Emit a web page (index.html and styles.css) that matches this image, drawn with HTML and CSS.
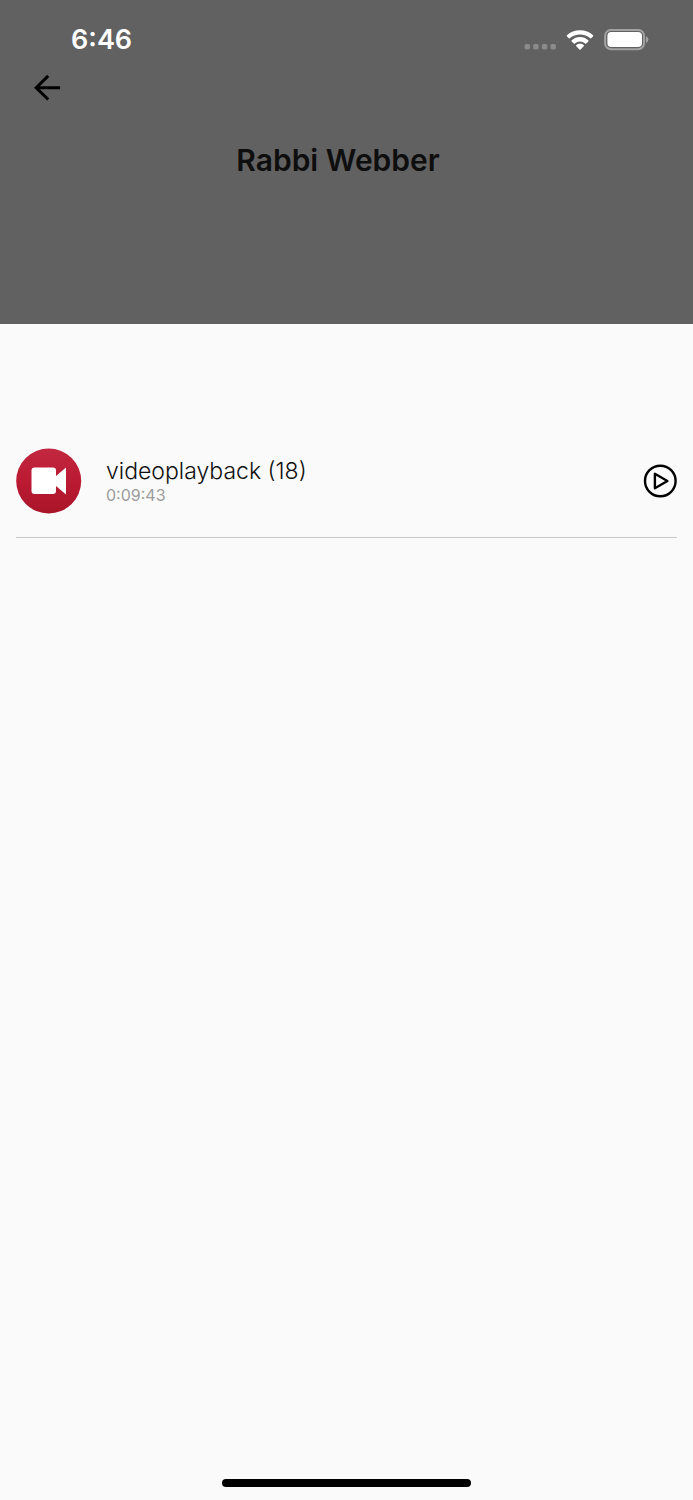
FILE: index.html
```html
<!DOCTYPE html>
<html lang="en">
<head>
<meta charset="utf-8">
<meta name="viewport" content="width=device-width, initial-scale=1">
<title>Rabbi Webber</title>
<link rel="stylesheet" href="styles.css">
</head>
<body>
<div class="screen">
  <header class="header">
    <div class="status">
      <time class="clock">6:46</time>
      <div class="indicators">
        <svg class="signal" viewBox="0 0 32 6" aria-hidden="true">
          <rect x="0.6" y="0" width="5.4" height="5.4" rx="1.6"/>
          <rect x="9.2" y="0" width="5.4" height="5.4" rx="1.6"/>
          <rect x="17.9" y="0" width="5.4" height="5.4" rx="1.6"/>
          <rect x="26.5" y="0" width="5.4" height="5.4" rx="1.6"/>
        </svg>
        <svg class="wifi" viewBox="0 0 28 21" aria-hidden="true">
          <path d="M14 0.2C19 0.2 23.6 2 27 5.2Q27.6 5.8 27 6.4L25.2 8.2Q24.6 8.7 24 8.1C21.3 5.6 17.8 4.4 14 4.4S6.7 5.6 4 8.1Q3.4 8.7 2.8 8.2L1 6.4Q0.4 5.8 1 5.2C4.4 2 9 0.2 14 0.2Z"/>
          <path d="M14 7C17.2 7 20.1 8.2 22.3 10.3Q22.9 10.9 22.3 11.5L20.3 13.4Q19.7 13.9 19.1 13.4C17.7 12.1 15.9 11.4 14 11.4S10.3 12.1 8.9 13.4Q8.3 13.9 7.7 13.4L5.7 11.5Q5.1 10.9 5.7 10.3C7.9 8.2 10.8 7 14 7Z"/>
          <path d="M14 13.7C15.5 13.7 16.7 14.2 17.7 15.1Q18.3 15.7 17.7 16.3L14.6 19.5Q14 20.1 13.4 19.5L10.3 16.3Q9.7 15.7 10.3 15.1C11.3 14.2 12.5 13.7 14 13.7Z"/>
        </svg>
        <svg class="battery" viewBox="0 0 45 22" aria-hidden="true">
          <rect class="battery-case" x="1.1" y="0.9" width="39" height="19.4" rx="6"/>
          <rect x="3.4" y="3.1" width="34.6" height="15" rx="4"/>
          <path class="battery-cap" d="M42 7.2Q44.4 8.4 44.4 10.6T42 14Z"/>
        </svg>
      </div>
    </div>
    <button class="back" type="button" aria-label="Back">
      <svg viewBox="0 0 26 26" aria-hidden="true"><path d="M26 12.7H2.5M14.2 0.9L2.2 12.7L14.2 24.5"/></svg>
    </button>
    <h1 class="title">Rabbi Webber</h1>
  </header>
  <main class="content">
    <ul class="list">
      <li class="item">
        <svg class="thumb" viewBox="0 0 66 66" aria-hidden="true">
          <defs><linearGradient id="red" x1="0" y1="0" x2="0" y2="1"><stop offset="0" stop-color="#c1283f"/><stop offset="0.5" stop-color="#bb1a33"/><stop offset="1" stop-color="#a91529"/></linearGradient></defs>
          <circle cx="32.7" cy="33" r="32.5" fill="url(#red)"/>
          <path fill="#fff" d="M18.5 19.5H37Q40 19.5 40 22.5V28L50 19.5V46.5L40 38V43Q40 46 37 46H18.5Q15.5 46 15.5 43V22.5Q15.5 19.5 18.5 19.5Z"/>
        </svg>
        <div class="info">
          <span class="name">videoplayback (18)</span>
          <span class="length">0:09:43</span>
        </div>
        <button class="play" type="button" aria-label="Play videoplayback (18)">
          <svg viewBox="0 0 34 34" aria-hidden="true"><circle cx="17.3" cy="17" r="15.3"/><path d="M11.9 9.8V24.2L24.4 17Z"/></svg>
        </button>
      </li>
    </ul>
  </main>
  <div class="home"></div>
</div>
</body>
</html>
```
FILE: styles.css
```css
* { box-sizing: border-box; }
body {
  margin: 0;
  background: #fafafa;
  font-family: Inter, "Liberation Sans", sans-serif;
}
button {
  display: block;
  padding: 0;
  border: 0;
  background: none;
}
svg { display: block; flex: none; }
.screen {
  display: flex;
  flex-direction: column;
  min-height: 100vh;
}
.header {
  display: flex;
  flex-direction: column;
  align-items: flex-start;
  padding: 20px 0 144px;
  background: #616161;
}
.status {
  display: flex;
  justify-content: space-between;
  align-items: center;
  width: 100%;
  padding: 0 44px 0 71px;
  color: #fff;
}
.clock { font-size: 27px; line-height: 40px; font-weight: 600; }
.indicators { display: flex; align-items: center; gap: 10px; fill: #fff; }
.signal { width: 32px; height: 6px; margin-top: 14px; fill: #8b8b8b; }
.wifi { width: 28px; height: 21px; }
.battery { width: 45px; height: 22px; }
.battery-case { fill: none; stroke: #a2a2a2; stroke-width: 2; }
.battery-cap { fill: #a2a2a2; }
.back { margin: 15px 0 0 34px; }
.back svg {
  width: 26px;
  height: 26px;
  fill: none;
  stroke: #000;
  stroke-width: 3;
}
.title {
  align-self: stretch;
  margin: 39px 17px 0 0;
  text-align: center;
  font-size: 30px;
  line-height: 40px;
  font-weight: 600;
  color: #0e0e0e;
}
.content { flex: 1; padding: 124px 16px 0; }
.list { margin: 0; padding: 0; list-style: none; }
.item {
  display: flex;
  align-items: center;
  padding-bottom: 23px;
  border-bottom: 1px solid #c8c8c8;
}
.thumb { width: 66px; height: 66px; }
.info {
  display: flex;
  flex: 1;
  flex-direction: column;
  padding-left: 24px;
}
.name { font-size: 23px; line-height: 28px; font-weight: 300; color: #111; }
.length { font-size: 16px; line-height: 20px; color: #9c9c9c; }
.play svg {
  width: 34px;
  height: 34px;
  fill: none;
  stroke: #000;
  stroke-width: 2.4;
  stroke-linejoin: round;
}
.home {
  align-self: center;
  width: 36%;
  height: 8px;
  margin-bottom: 13px;
  border-radius: 4px;
  background: #000;
}
```
